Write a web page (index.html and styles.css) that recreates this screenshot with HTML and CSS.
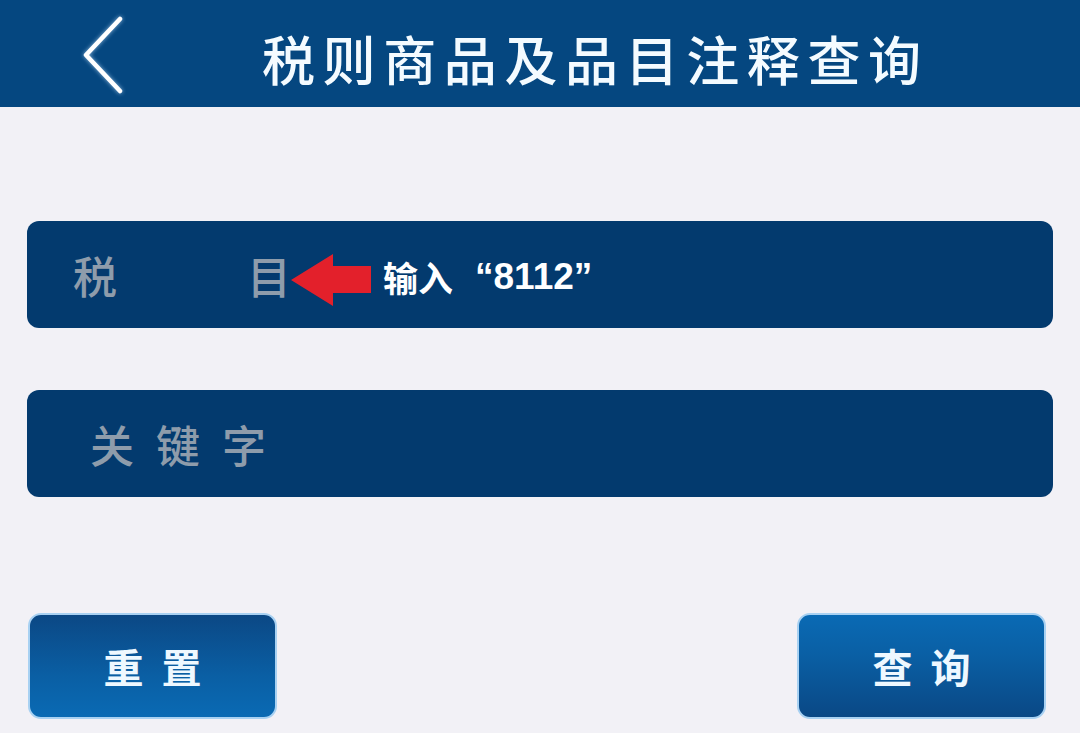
FILE: index.html
```html
<!DOCTYPE html>
<html lang="zh-CN">
<head>
<meta charset="utf-8">
<title>税则商品及品目注释查询</title>
<link rel="stylesheet" href="styles.css">
</head>
<body>
<header class="topbar">
  <svg class="back" width="44" height="80" viewBox="0 0 44 80">
    <polyline points="38,4 4,40 38,76" fill="none" stroke="#ffffff" stroke-width="4.5" stroke-linecap="round" stroke-linejoin="round"/>
  </svg>
  <h1 class="title">税则商品及品目注释查询</h1>
</header>
<main class="content">
  <div class="field field-code">
    <div class="label label-split"><span>税</span><span>目</span></div>
    <svg class="arrow" width="80" height="52" viewBox="0 0 80 52">
      <polygon points="0,26 42,0 42,12 80,12 80,39 42,39 42,52" fill="#e3202b"/>
    </svg>
    <span class="hint">输入<span class="hint-num">“8112”</span></span>
  </div>
  <div class="field field-key">
    <div class="label label-spaced">关键字</div>
  </div>
  <div class="actions">
    <button class="btn btn-reset">重置</button>
    <button class="btn btn-query">查询</button>
  </div>
</main>
</body>
</html>
```
FILE: styles.css
```css
html, body {
  margin: 0;
  padding: 0;
}
body {
  width: 1080px;
  height: 733px;
  background: #f2f1f6;
  font-family: "Noto Sans CJK SC", "Noto Sans", sans-serif;
  overflow: hidden;
}
.topbar {
  height: 107px;
  background: #054780;
  display: flex;
  align-items: center;
}
.back {
  margin-left: 82px;
  margin-top: 2px;
  filter: drop-shadow(0 0 2px rgba(200,230,255,0.7));
}
.title {
  margin: 0 0 0 136px;
  color: #f4fbff;
  font-size: 53px;
  font-weight: 500;
  letter-spacing: 7.6px;
  line-height: 1;
  padding-top: 9px;
}
.content {
  padding: 114px 27px 0 27px;
}
.field {
  height: 107px;
  background: #033a6e;
  border-radius: 12px;
  display: flex;
  align-items: center;
  box-sizing: border-box;
}
.field-code {
  padding-left: 46px;
}
.field-key {
  margin-top: 62px;
  padding-left: 63px;
}
.label {
  color: #8e9cab;
  font-size: 44px;
  font-weight: 500;
  line-height: 1;
}
.label-split {
  width: 218px;
  display: flex;
  justify-content: space-between;
}
.label-spaced {
  letter-spacing: 22px;
}
.arrow {
  margin-left: 0;
  margin-top: 10px;
}
.hint {
  margin-left: 12px;
  margin-top: 4px;
  color: #ffffff;
  font-family: "Noto Sans CJK SC", sans-serif;
  font-size: 35px;
  font-weight: 700;
  line-height: 1;
  display: flex;
  align-items: center;
}
.hint-num {
  margin-left: 22px;
  font-family: "Liberation Sans", sans-serif;
  font-size: 37px;
  font-weight: 700;
}
.actions {
  margin-top: 116px;
  display: flex;
  justify-content: space-between;
  padding: 0 7px 0 1px;
}
.btn {
  width: 249px;
  height: 106px;
  border: 2px solid #a8d1f2;
  border-radius: 13px;
  color: #eef8ff;
  font-family: "Noto Sans CJK SC", sans-serif;
  font-size: 40px;
  font-weight: 700;
  letter-spacing: 18px;
  text-indent: 18px;
  padding: 0;
  box-sizing: border-box;
}
.btn-reset {
  background: linear-gradient(to bottom, #0b4885 0%, #0a5fa4 60%, #0a6ab4 100%);
}
.btn-query {
  background: linear-gradient(to bottom, #0a6ab4 0%, #0a5fa4 40%, #0a4885 100%);
}
```
